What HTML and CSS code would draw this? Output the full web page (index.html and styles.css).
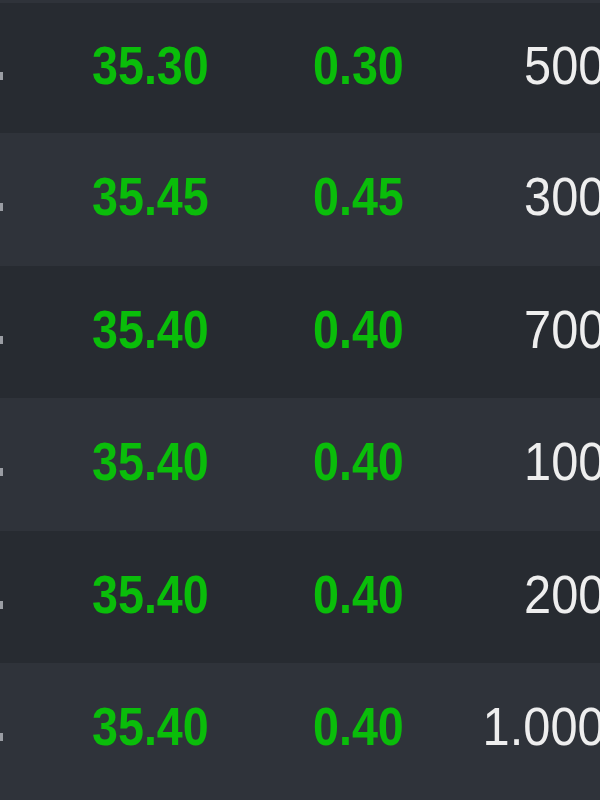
FILE: index.html
```html
<!DOCTYPE html>
<html>
<head>
<meta charset="utf-8">
<link rel="stylesheet" href="styles.css">
</head>
<body>
<div class="table">
  <div class="row light edge"></div>
  <div class="row dark">
    <div class="c1"><span class="mark"></span></div>
    <div class="c2"><span class="num green">35.30</span></div>
    <div class="c3"><span class="num green">0.30</span></div>
    <div class="c4"><span class="num white">500</span></div>
  </div>
  <div class="row light">
    <div class="c1"><span class="mark"></span></div>
    <div class="c2"><span class="num green">35.45</span></div>
    <div class="c3"><span class="num green">0.45</span></div>
    <div class="c4"><span class="num white">300</span></div>
  </div>
  <div class="row dark">
    <div class="c1"><span class="mark"></span></div>
    <div class="c2"><span class="num green">35.40</span></div>
    <div class="c3"><span class="num green">0.40</span></div>
    <div class="c4"><span class="num white">700</span></div>
  </div>
  <div class="row light">
    <div class="c1"><span class="mark"></span></div>
    <div class="c2"><span class="num green">35.40</span></div>
    <div class="c3"><span class="num green">0.40</span></div>
    <div class="c4"><span class="num white">100</span></div>
  </div>
  <div class="row dark">
    <div class="c1"><span class="mark"></span></div>
    <div class="c2"><span class="num green">35.40</span></div>
    <div class="c3"><span class="num green">0.40</span></div>
    <div class="c4"><span class="num white">200</span></div>
  </div>
  <div class="row light">
    <div class="c1"><span class="mark"></span></div>
    <div class="c2"><span class="num green">35.40</span></div>
    <div class="c3"><span class="num green">0.40</span></div>
    <div class="c4"><span class="num white">1.000</span></div>
  </div>
</div>
</body>
</html>
```
FILE: styles.css
```css
html, body {
  margin: 0;
  padding: 0;
  width: 600px;
  height: 800px;
  overflow: hidden;
  background: #2f333a;
  font-family: "Liberation Sans", Arial, sans-serif;
}
.table {
  display: grid;
  grid-template-rows: 3px 130px repeat(5, 132.5px);
  width: 600px;
}
.row {
  display: grid;
  grid-template-columns: 92px 221px 130px 157px;
  align-items: center;
  padding-bottom: 5px;
  overflow: hidden;
}
.edge { padding-bottom: 0; }
.dark { background: #272b31; }
.light { background: #2f333a; }
.c1 { position: relative; height: 100%; }
.mark {
  position: absolute;
  left: 0;
  top: 55%;
  width: 3px;
  height: 8px;
  background: #9a9da3;
}
.c4 {
  display: flex;
  justify-content: flex-end;
  margin-right: -5px;
}
.num {
  display: inline-block;
  font-size: 53px;
  line-height: 1;
  white-space: nowrap;
  transform: scaleX(0.88);
  transform-origin: left center;
}
.c4 .num {
  transform: scaleX(0.92);
  transform-origin: right center;
}
.green { color: #0abd0a; font-weight: bold; }
.white { color: #eeeeee; font-weight: normal; }
```
